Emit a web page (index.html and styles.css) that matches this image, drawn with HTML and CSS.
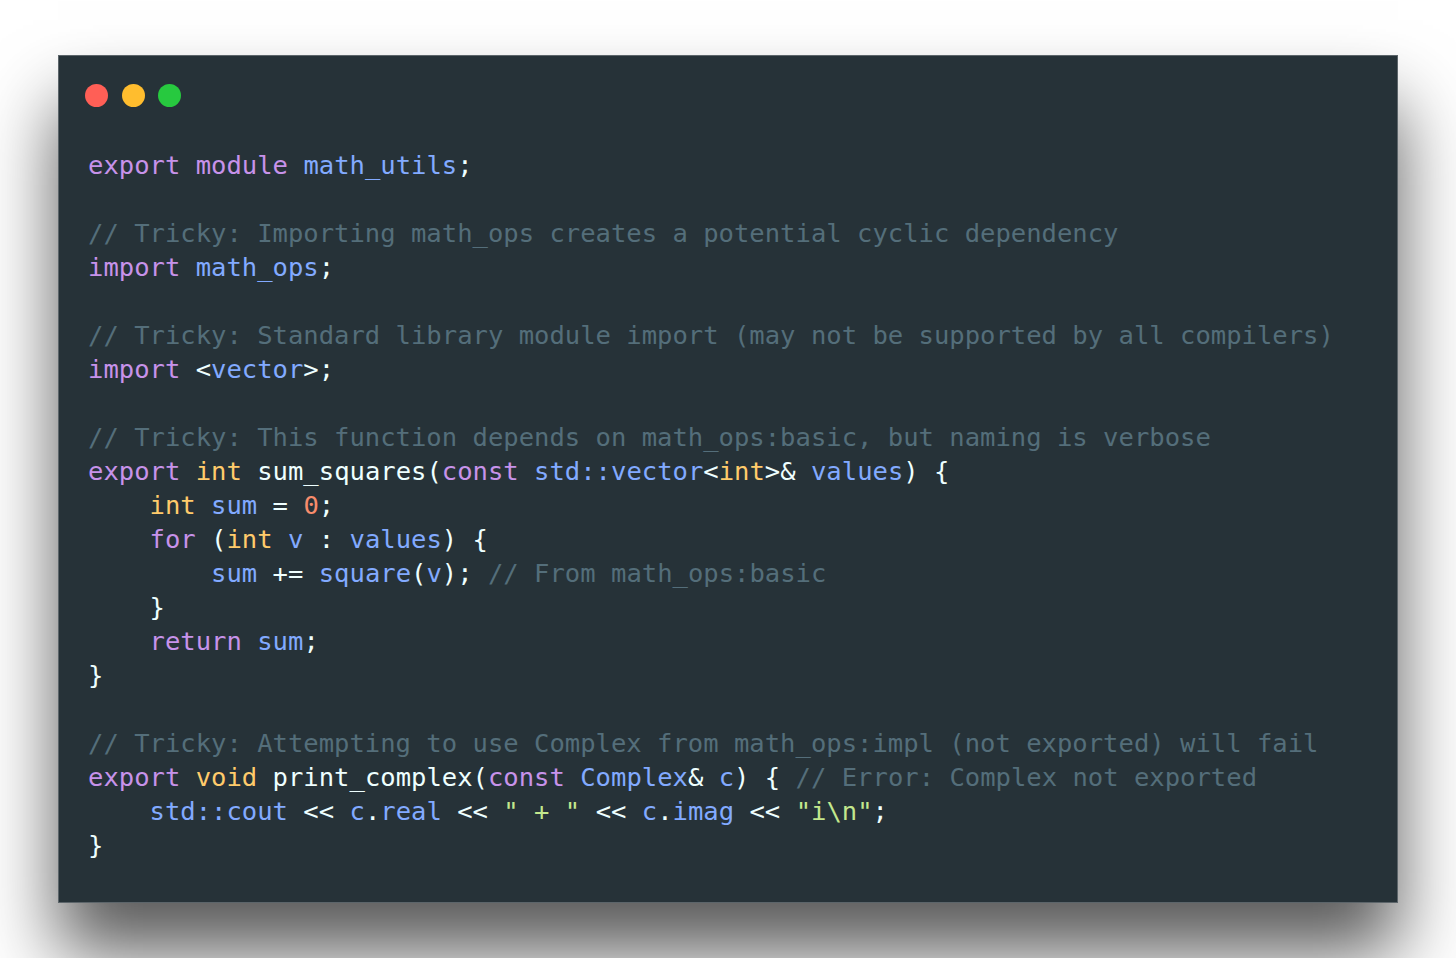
FILE: index.html
```html
<!DOCTYPE html>
<html>
<head>
<meta charset="utf-8">
<link rel="stylesheet" href="styles.css">
</head>
<body>
<div class="window">
  <div class="titlebar">
    <span class="dot red"></span>
    <span class="dot yellow"></span>
    <span class="dot green"></span>
  </div>
<pre class="code"><span class="k">export</span> <span class="k">module</span> <span class="v">math_utils</span>;

<span class="c">// Tricky: Importing math_ops creates a potential cyclic dependency</span>
<span class="k">import</span> <span class="v">math_ops</span>;

<span class="c">// Tricky: Standard library module import (may not be supported by all compilers)</span>
<span class="k">import</span> &lt;<span class="v">vector</span>&gt;;

<span class="c">// Tricky: This function depends on math_ops:basic, but naming is verbose</span>
<span class="k">export</span> <span class="t">int</span> sum_squares(<span class="k">const</span> <span class="v">std::vector</span>&lt;<span class="t">int</span>&gt;&amp; <span class="v">values</span>) {
    <span class="t">int</span> <span class="v">sum</span> = <span class="n">0</span>;
    <span class="k">for</span> (<span class="t">int</span> <span class="v">v</span> : <span class="v">values</span>) {
        <span class="v">sum</span> += <span class="v">square</span>(<span class="v">v</span>); <span class="c">// From math_ops:basic</span>
    }
    <span class="k">return</span> <span class="v">sum</span>;
}

<span class="c">// Tricky: Attempting to use Complex from math_ops:impl (not exported) will fail</span>
<span class="k">export</span> <span class="t">void</span> print_complex(<span class="k">const</span> <span class="v">Complex</span>&amp; <span class="v">c</span>) { <span class="c">// Error: Complex not exported</span>
    <span class="v">std::cout</span> &lt;&lt; <span class="v">c</span>.<span class="v">real</span> &lt;&lt; <span class="s">" + "</span> &lt;&lt; <span class="v">c</span>.<span class="v">imag</span> &lt;&lt; <span class="s">"i\n"</span>;
}</pre>
</div>
</body>
</html>
```

FILE: styles.css
```css
html, body {
  margin: 0;
  padding: 0;
  background: #ffffff;
}

body {
  padding: 55px 58px 0 58px;
  min-height: 958px;
  box-sizing: border-box;
}

.window {
  width: 1340px;
  height: 848px;
  box-sizing: border-box;
  background: #263238;
  border: 1px solid rgba(255, 255, 255, 0.25);
  box-shadow: 0 50px 70px rgba(0, 0, 0, 0.65);
  padding: 28px 0 0 26px;
}

.titlebar {
  display: flex;
  gap: 13.5px;
  height: 23px;
}

.dot {
  width: 23px;
  height: 23px;
  border-radius: 50%;
  display: block;
}

.red { background: #ff5f56; }
.yellow { background: #ffbd2e; }
.green { background: #27c93f; }

.code {
  margin: 41px 0 0 3px;
  font-family: "DejaVu Sans Mono", monospace;
  font-size: 25.55px;
  line-height: 34px;
  color: #eeffff;
  white-space: pre;
}

.k { color: #c792ea; }
.v { color: #82aaff; }
.t { color: #ffcb6b; }
.c { color: #546e7a; }
.n { color: #f78c6c; }
.s { color: #c3e88d; }
```
